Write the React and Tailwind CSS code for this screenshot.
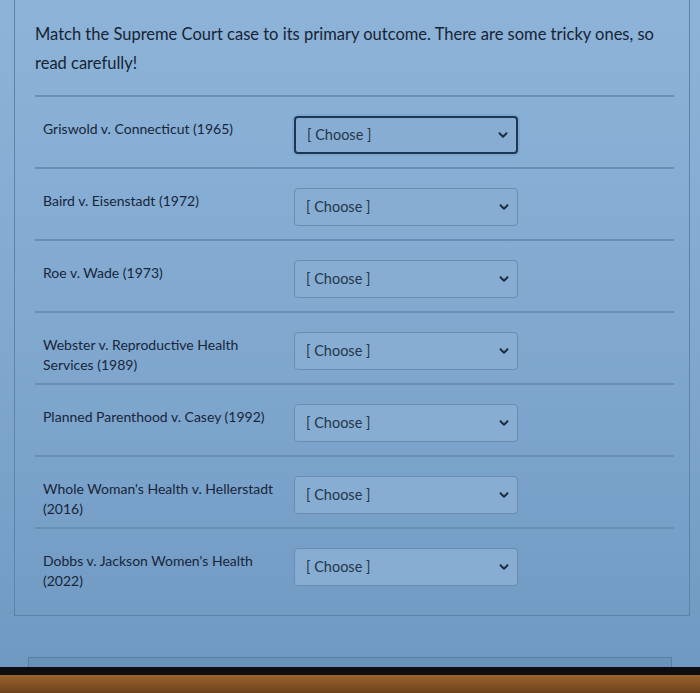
import React from 'react';
import { ChevronDown } from 'lucide-react';
import { clsx } from 'clsx';

const cases = [
  'Griswold v. Connecticut (1965)',
  'Baird v. Eisenstadt (1972)',
  'Roe v. Wade (1973)',
  'Webster v. Reproductive Health Services (1989)',
  'Planned Parenthood v. Casey (1992)',
  "Whole Woman's Health v. Hellerstadt (2016)",
  "Dobbs v. Jackson Women's Health (2022)",
];

const ChooseSelect = ({ focused }) => (
  <div
    className={clsx(
      'flex h-[38px] w-[224px] shrink-0 items-center justify-between rounded-[4px] bg-[#88add2] pl-[11px] pr-[6px]',
      focused
        ? 'border-2 border-[#1d3654] shadow-[0_0_0_2px_rgba(120,160,200,0.6)]'
        : 'border border-[#6a8cae]'
    )}
  >
    <span className="text-[14.5px] text-[#24364a]">[ Choose ]</span>
    <ChevronDown size={14} strokeWidth={3.5} className="text-[#1f2f42]" />
  </div>
);

export default function App() {
  return (
    <div
      className="flex h-[693px] w-[700px] flex-col overflow-hidden bg-gradient-to-b from-[#8db3d8] via-[#80a8cf] to-[#6f98c1] text-[#1e2b3a]"
      style={{ fontFamily: 'Lato, "Open Sans", sans-serif' }}
    >
      <div className="ml-[14px] mr-[10px] h-[616px] shrink-0 border-x border-b border-[#5f83a7] pl-[20px] pr-[15px]">
        <p className="pt-[20px] text-[16.5px] leading-[29px] text-[#172434]">
          Match the Supreme Court case to its primary outcome. There are some tricky ones, so
          read carefully!
        </p>
        <div className="mt-[17px]">
          {cases.map((c, i) => (
            <div
              key={c}
              className="flex h-[72px] items-start border-t-2 border-[#6b8fb2] pt-[19px] pl-[8px]"
            >
              <div className="w-[251px] shrink-0 pt-[3px] pr-[10px] text-[14px] leading-[20px] text-[#18253a]">
                {c}
              </div>
              <ChooseSelect focused={i === 0} />
            </div>
          ))}
        </div>
      </div>
      <div className="mx-[28px] mt-[41px] h-[10px] shrink-0 border-x border-t border-[#5a7ea3] bg-[#6a93bc]" />
      <div className="h-[8px] shrink-0 bg-[#0e0e10]" />
      <div className="flex-1 bg-gradient-to-b from-[#9a6430] to-[#6e421c]" />
    </div>
  );
}
